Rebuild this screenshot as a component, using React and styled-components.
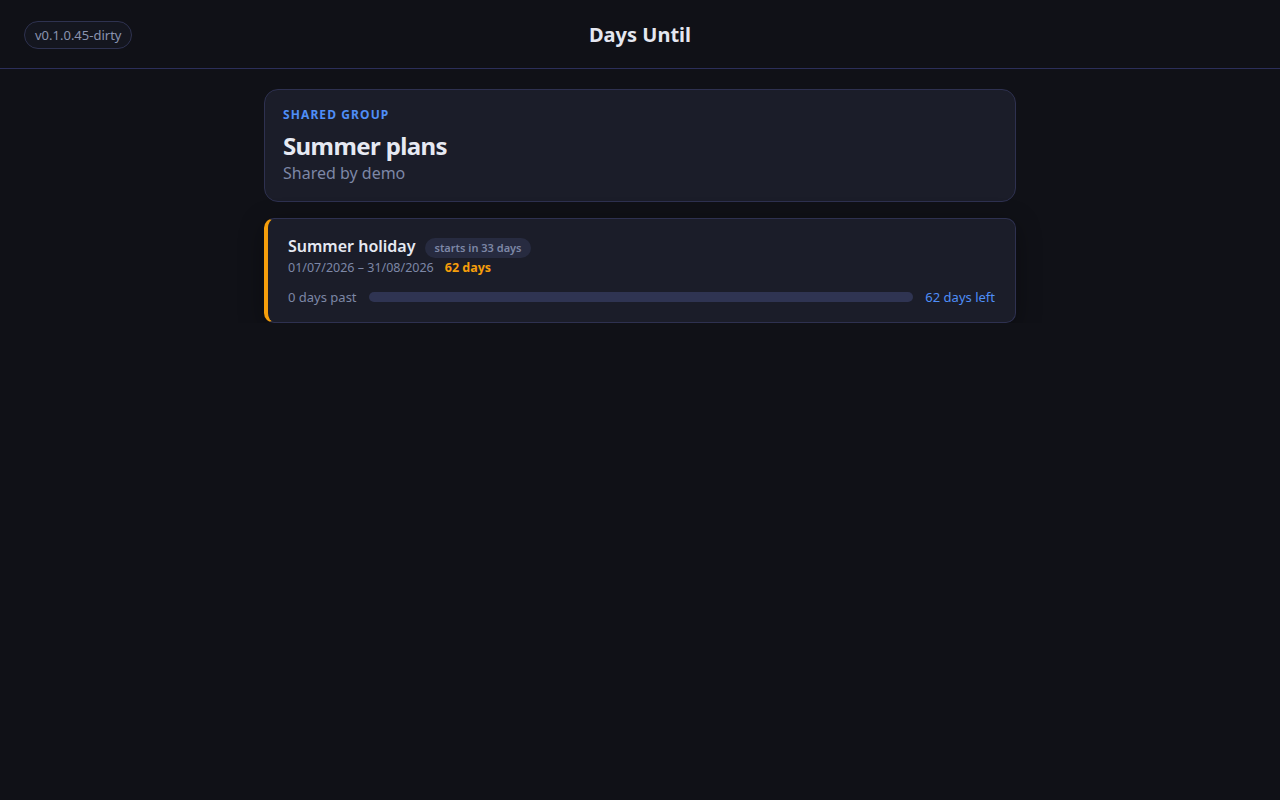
import React from "react";
import styled, { createGlobalStyle } from "styled-components";

const GlobalStyle = createGlobalStyle`
  html, body {
    margin: 0;
    padding: 0;
    background: #101117;
    color: #e6e8f0;
    font-family: "Noto Sans", "Open Sans", sans-serif;
  }
  * { box-sizing: border-box; }
`

const Header = styled.header`
  height: 69px;
  display: grid;
  grid-template-columns: 1fr auto 1fr;
  align-items: center;
  padding: 0 24px;
  border-bottom: 1px solid #2c2f5a;
`

const Version = styled.span`
  justify-self: start;
  display: inline-flex;
  align-items: center;
  height: 28px;
  margin-top: 1px;
  padding: 0 10px;
  border: 1px solid #2e3250;
  border-radius: 999px;
  font-size: 13px;
  color: #8a93b0;
  background: #14161f;
`

const AppTitle = styled.h1`
  margin: 0;
  font-size: 20px;
  font-weight: 700;
  color: #e4e7f0;
`

const Main = styled.main`
  width: 752px;
  margin: 20px auto 0;
  display: flex;
  flex-direction: column;
  gap: 16px;
`

const GroupCard = styled.section`
  background: #1b1d29;
  border: 1px solid #2e3150;
  border-radius: 14px;
  padding: 16px 18px 17px;
`

const Eyebrow = styled.div`
  font-size: 12px;
  font-weight: 700;
  letter-spacing: 1.1px;
  color: #4f8ef7;
  line-height: 18px;
`

const GroupTitle = styled.h2`
  margin: 7px 0 0;
  font-size: 24px;
  font-weight: 700;
  letter-spacing: -0.6px;
  line-height: 30px;
  color: #e6e9f2;
`

const Sub = styled.div`
  margin-top: 1px;
  font-size: 16px;
  color: #7d87a6;
  line-height: 22px;
`

const EventCard = styled.article`
  background: #1b1d29;
  border: 1px solid #2e3150;
  border-left: 4px solid #f59e0b;
  border-radius: 10px;
  padding: 16px 20px 16px 20px;
  box-shadow: 0 6px 24px rgba(0, 0, 0, 0.35);
`

const TitleRow = styled.div`
  display: flex;
  align-items: baseline;
  gap: 10px;
  height: 22px;
`

const EventName = styled.div`
  font-size: 16px;
  font-weight: 600;
  color: #e6e9f2;
  line-height: 22px;
`

const Pill = styled.span`
  display: inline-flex;
  align-items: center;
  height: 20px;
  padding: 0 9px;
  border-radius: 999px;
  background: #272b40;
  color: #7d87a6;
  font-size: 11px;
  font-weight: 600;
`

const Dates = styled.div`
  display: flex;
  align-items: center;
  gap: 11px;
  margin-top: 2px;
  font-size: 12.5px;
  color: #7d87a6;
  line-height: 18px;
`

const Duration = styled.span`
  color: #f59e0b;
  font-weight: 700;
`

const ProgressRow = styled.div`
  display: flex;
  align-items: center;
  gap: 12px;
  margin-top: 11px;
  font-size: 13px;
  line-height: 18px;
  color: #7d87a6;
`

const Track = styled.div`
  flex: 1;
  height: 10px;
  border-radius: 5px;
  background: #2f3452;
  overflow: hidden;
`

const Fill = styled.div`
  height: 100%;
  background: #4f8ef7;
`

const Left = styled.span`
  color: #4f8ef7;
`

export default function App() {
  const past = 0;
  const total = 62;
  return (
    <>
      <GlobalStyle />
      <Header>
        <Version>v0.1.0.45-dirty</Version>
        <AppTitle>Days Until</AppTitle>
        <div />
      </Header>
      <Main>
        <GroupCard>
          <Eyebrow>SHARED GROUP</Eyebrow>
          <GroupTitle>Summer plans</GroupTitle>
          <Sub>Shared by demo</Sub>
        </GroupCard>
        <EventCard>
          <TitleRow>
            <EventName>Summer holiday</EventName>
            <Pill>starts in 33 days</Pill>
          </TitleRow>
          <Dates>
            <span>01/07/2026 – 31/08/2026</span>
            <Duration>62 days</Duration>
          </Dates>
          <ProgressRow>
            <span>{past} days past</span>
            <Track>
              <Fill style={{ width: `${(past / total) * 100}%` }} />
            </Track>
            <Left>{total - past} days left</Left>
          </ProgressRow>
        </EventCard>
      </Main>
    </>
  );
}
